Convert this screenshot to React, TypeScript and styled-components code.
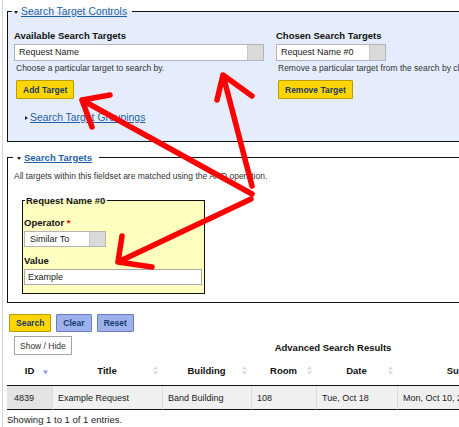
import { type JSX } from 'react';
import styled, { createGlobalStyle } from 'styled-components';

type SortState = 'none' | 'desc';

type Column = {
  readonly label: string;
  readonly width: number;
  readonly sort: SortState;
};

const COLUMNS: Column[] = [
  { label: 'ID', width: 45, sort: 'desc' },
  { label: 'Title', width: 110, sort: 'none' },
  { label: 'Building', width: 89, sort: 'none' },
  { label: 'Room', width: 65, sort: 'none' },
  { label: 'Date', width: 81, sort: 'none' },
  { label: 'Submitted', width: 146, sort: 'none' },
  { label: 'Status', width: 116, sort: 'none' },
];

const ROWS: string[][] = [
  ['4839', 'Example Request', 'Band Building', '108', 'Tue, Oct 18', 'Mon, Oct 10, 2016', 'Open'],
];

const GlobalStyle = createGlobalStyle`
  html,
  body {
    margin: 0;
    padding: 0;
    background: #fff;
    overflow: hidden;
  }
  body {
    font-family: "Liberation Sans", Arial, sans-serif;
    font-size: 9px;
    color: #222;
  }
`;

const SortIcon = ({ state }: { state: SortState }) => (
  <StyledSortIcon
    viewBox="0 0 5 9"
    width={5}
    height={9}
  >
    {state === 'none' ? (
      <>
        <path
          d="M0 3.6 L2.5 0.4 L5 3.6 Z"
          fill="#d6d6d6"
        />
        <path
          d="M0 5.4 L2.5 8.6 L5 5.4 Z"
          fill="#d6d6d6"
        />
      </>
    ) : (
      <path
        d="M0 4.6 L2.5 8.2 L5 4.6 Z"
        fill="#8796de"
      />
    )}
  </StyledSortIcon>
);

// hand-drawn red annotation arrows over the screenshot
const Arrows = () => (
  <ArrowLayer
    viewBox="0 0 459 427"
    width={459}
    height={427}
  >
    <path d="M252 186 L223 75 M217 100 L223 75 L252 96" />
    <path d="M252 194 L82 100 M110 95 L82 100 L92 127" />
    <path d="M251 199 L118 262 M122 236 L118 262 L152 267" />
  </ArrowLayer>
);

const App = (): JSX.Element => (
  <Root>
    <GlobalStyle />
    <Page>
      <Fieldset
        $tone="blue"
        $pad="11px 6px 17px 6px"
      >
        <Legend
          $shift={-2}
          $padL={2}
          $padR={5}
          $lh={15}
          $size={10.4}
        >
          <DownCaret $gap={3} />
          <LegendLink>Search Target Controls</LegendLink>
        </Legend>
        <Columns>
          <Column $width={250}>
            <Label>Available Search Targets</Label>
            <SelectBox
              $width={250}
              $height={17}
            >
              <SelectValue>Request Name</SelectValue>
              <SelectHandle />
            </SelectBox>
            <Help>Choose a particular target to search by.</Help>
            <TargetButton $variant="primary">Add Target</TargetButton>
          </Column>
          <Column>
            <Label>Chosen Search Targets</Label>
            <SelectBox
              $width={110}
              $height={17}
            >
              <SelectValue>Request Name #0</SelectValue>
              <SelectHandle />
            </SelectBox>
            <Help>Remove a particular target from the search by clicking it.</Help>
            <TargetButton $variant="primary">Remove Target</TargetButton>
          </Column>
        </Columns>
        <Groupings>
          <RightCaret />
          <LegendLink>Search Target Groupings</LegendLink>
        </Groupings>
      </Fieldset>

      <Fieldset
        $tone="plain"
        $pad="4px 6px 8px 6px"
        $mt={8}
      >
        <Legend
          $shift={-1}
          $padL={4}
          $padR={7}
          $lh={15}
          $size={9.5}
        >
          <DownCaret $gap={3} />
          <LegendLink $bold>Search Targets</LegendLink>
        </Legend>
        <Help $flush>All targets within this fieldset are matched using the AND operation.</Help>
        <TargetFieldset
          $tone="yellow"
          $pad="10px 1px 8px 1px"
          $mt={12}
        >
          <Legend
            $shift={1}
            $padL={1}
            $padR={2}
            $lh={13}
            $size={9.5}
          >
            <LegendTitle>Request Name #0</LegendTitle>
          </Legend>
          <Label>
            Operator <Required>*</Required>
          </Label>
          <SelectBox
            $width={82}
            $height={16}
          >
            <SelectValue $indent={5}>Similar To</SelectValue>
            <SelectHandle />
          </SelectBox>
          <Label $mt={8}>Value</Label>
          <TextInput
            readOnly
            value="Example"
          />
        </TargetFieldset>
      </Fieldset>

      <ButtonRow>
        <ActionButton $variant="primary">Search</ActionButton>
        <ActionButton $variant="secondary">Clear</ActionButton>
        <ActionButton $variant="secondary">Reset</ActionButton>
      </ButtonRow>

      <Toolbar>
        <ShowHide>Show / Hide</ShowHide>
        <ResultsTitle>Advanced Search Results</ResultsTitle>
      </Toolbar>

      <Table>
        <colgroup>
          {COLUMNS.map((col) => (
            <col
              key={col.label}
              style={{ width: col.width }}
            />
          ))}
        </colgroup>
        <thead>
          <tr>
            {COLUMNS.map((col) => (
              <HeadCell key={col.label}>
                <HeadInner>
                  <HeadSpacer />
                  <HeadLabel>{col.label}</HeadLabel>
                  <SortIcon state={col.sort} />
                </HeadInner>
              </HeadCell>
            ))}
          </tr>
        </thead>
        <tbody>
          {ROWS.map((row) => (
            <tr key={row[0]}>
              {row.map((value, i) => (
                <BodyCell
                  key={COLUMNS[i].label}
                  $sorted={COLUMNS[i].sort !== 'none'}
                  $first={i === 0}
                >
                  {value}
                </BodyCell>
              ))}
            </tr>
          ))}
        </tbody>
      </Table>
      <Info>Showing 1 to 1 of 1 entries.</Info>
    </Page>
    <Arrows />
  </Root>
);

export default App;

const Root = styled.div`
  position: relative;
  width: 459px;
  height: 427px;
  overflow: hidden;
`;

const Page = styled.div`
  box-sizing: border-box;
  width: 700px;
  min-height: 427px;
  margin-left: 2px;
  padding: 4px 0 0 4px;
  border-left: 1px solid #d4d4d4;
`;

const TONES = {
  blue: '#e5edfd',
  plain: '#ffffff',
  yellow: '#ffffc0',
};

const Fieldset = styled.fieldset<{
  $tone: keyof typeof TONES;
  $pad: string;
  $mt?: number;
}>`
  box-sizing: border-box;
  width: 652px;
  min-width: 0;
  margin: ${({ $mt }) => $mt ?? 0}px 0 0 0;
  padding: ${({ $pad }) => $pad};
  border: 1px solid #111;
  background: ${({ $tone }) => TONES[$tone]};
  font-size: 9px;
  line-height: 12px;
`;

const TargetFieldset = styled(Fieldset)`
  width: 183px;
  margin-left: 8px;
`;

const Legend = styled.legend<{
  $shift: number;
  $padL: number;
  $padR: number;
  $lh: number;
  $size: number;
}>`
  margin-left: ${({ $shift }) => $shift}px;
  padding: 0 ${({ $padR }) => $padR}px 0 ${({ $padL }) => $padL}px;
  font-size: ${({ $size }) => $size}px;
  line-height: ${({ $lh }) => $lh}px;
  white-space: nowrap;
`;

const LegendLink = styled.a<{ $bold?: boolean }>`
  color: #1f5fa6;
  text-decoration: underline;
  font-weight: ${({ $bold }) => ($bold ? 'bold' : 'normal')};
  cursor: pointer;
`;

const LegendTitle = styled.span`
  font-weight: bold;
  color: #111;
`;

const DownCaret = styled.span<{ $gap: number }>`
  display: inline-block;
  width: 0;
  height: 0;
  margin-right: ${({ $gap }) => $gap}px;
  border-left: 2.5px solid transparent;
  border-right: 2.5px solid transparent;
  border-top: 3px solid #222;
  vertical-align: middle;
`;

const RightCaret = styled.span`
  display: inline-block;
  width: 0;
  height: 0;
  border-top: 2.5px solid transparent;
  border-bottom: 2.5px solid transparent;
  border-left: 3px solid #222;
`;

const Columns = styled.div`
  display: flex;
  gap: 12px;
`;

const Column = styled.div<{ $width?: number }>`
  display: flex;
  flex: none;
  flex-direction: column;
  align-items: flex-start;
  width: ${({ $width }) => ($width != null ? `${$width}px` : 'auto')};
`;

const Label = styled.div<{ $mt?: number }>`
  margin: ${({ $mt }) => $mt ?? 0}px 0 2px 0;
  font-size: 9.5px;
  font-weight: bold;
  line-height: 12px;
  color: #111;
  white-space: nowrap;
`;

const Required = styled.span`
  color: #e00000;
`;

const SelectBox = styled.div<{ $width: number; $height: number }>`
  box-sizing: border-box;
  display: flex;
  width: ${({ $width }) => $width}px;
  height: ${({ $height }) => $height}px;
  border: 1px solid #b5b5b5;
  background: #fff;
`;

const SelectValue = styled.span<{ $indent?: number }>`
  flex: 1;
  padding-left: ${({ $indent }) => $indent ?? 4}px;
  overflow: hidden;
  font-size: 9px;
  line-height: 15px;
  color: #222;
  white-space: nowrap;
`;

const SelectHandle = styled.span`
  width: 15px;
  background: #dadada;
  border-left: 1px solid #c6c6c6;
`;

const Help = styled.div<{ $flush?: boolean }>`
  margin: 1px 0 0 ${({ $flush }) => ($flush ? 0 : 2)}px;
  font-size: 8.5px;
  line-height: 12px;
  color: #333;
  white-space: nowrap;
`;

const ActionButton = styled.button<{ $variant: 'primary' | 'secondary' }>`
  box-sizing: border-box;
  height: 18px;
  margin: 0;
  padding: 0 6px;
  border: 1px solid ${({ $variant }) => ($variant === 'primary' ? '#b89c00' : '#6b7bbf')};
  border-radius: 1px;
  background: ${({ $variant }) => ($variant === 'primary' ? '#ffd500' : '#9eb1ec')};
  color: #163b6b;
  font-family: "Liberation Sans", Arial, sans-serif;
  font-size: 8.5px;
  font-weight: bold;
  letter-spacing: 0;
  cursor: pointer;
`;

const TargetButton = styled(ActionButton)`
  height: 19px;
  margin: 6px 0 0 2px;
`;

const Groupings = styled.div`
  display: flex;
  align-items: center;
  gap: 2px;
  margin: 12px 0 0 11px;
  font-size: 10.4px;
  line-height: 13px;
`;

const TextInput = styled.input`
  box-sizing: border-box;
  display: block;
  width: 178px;
  height: 16px;
  margin: 0;
  padding: 0 3px;
  border: 1px solid #a9a9a9;
  background: #fff;
  font-family: "Liberation Sans", Arial, sans-serif;
  font-size: 9px;
  color: #222;
`;

const ButtonRow = styled.div`
  display: flex;
  gap: 5px;
  margin: 11px 0 0 2px;
`;

const Toolbar = styled.div`
  display: grid;
  grid-template-columns: 1fr auto 1fr;
  align-items: end;
  width: 652px;
  margin-top: 4px;
`;

const ShowHide = styled.button`
  justify-self: start;
  box-sizing: border-box;
  height: 19px;
  margin: 0 0 0 7px;
  padding: 0 5px;
  border: 1px solid #a3a3a3;
  background: #fff;
  color: #333;
  font-family: "Liberation Sans", Arial, sans-serif;
  font-size: 8.5px;
  cursor: pointer;
`;

const ResultsTitle = styled.div`
  margin-bottom: 1px;
  font-size: 9.5px;
  font-weight: bold;
  line-height: 12px;
  color: #111;
`;

const Table = styled.table`
  width: 652px;
  table-layout: fixed;
  border-collapse: separate;
  border-spacing: 0;
`;

const HeadCell = styled.th`
  box-sizing: border-box;
  height: 31px;
  padding: 0 4px;
  border-bottom: 1px solid #111;
  font-size: 9.5px;
  font-weight: bold;
  color: #111;
`;

const HeadInner = styled.div`
  display: flex;
  align-items: center;
`;

const HeadSpacer = styled.span`
  width: 5px;
  flex: none;
`;

const HeadLabel = styled.span`
  flex: 1;
  text-align: center;
  white-space: nowrap;
`;

const StyledSortIcon = styled.svg`
  flex: none;
  display: block;
`;

const BodyCell = styled.td<{ $sorted: boolean; $first: boolean }>`
  box-sizing: border-box;
  height: 24px;
  padding: 0 0 0 ${({ $first }) => ($first ? 7 : 5)}px;
  border-bottom: 1px solid #111;
  border-left: ${({ $first }) => ($first ? 'none' : '1px solid #dcdcdc')};
  background: ${({ $sorted }) => ($sorted ? '#e3e3e3' : '#f0f0f0')};
  font-size: 9px;
  color: #222;
  white-space: nowrap;
  overflow: hidden;
`;

const Info = styled.div`
  margin-top: 4px;
  font-size: 9.5px;
  line-height: 12px;
  color: #222;
`;

const ArrowLayer = styled.svg`
  position: absolute;
  top: 0;
  left: 0;
  pointer-events: none;
  fill: none;
  stroke: #ff0000;
  stroke-width: 5.5;
  stroke-linecap: round;
  stroke-linejoin: round;
`;
